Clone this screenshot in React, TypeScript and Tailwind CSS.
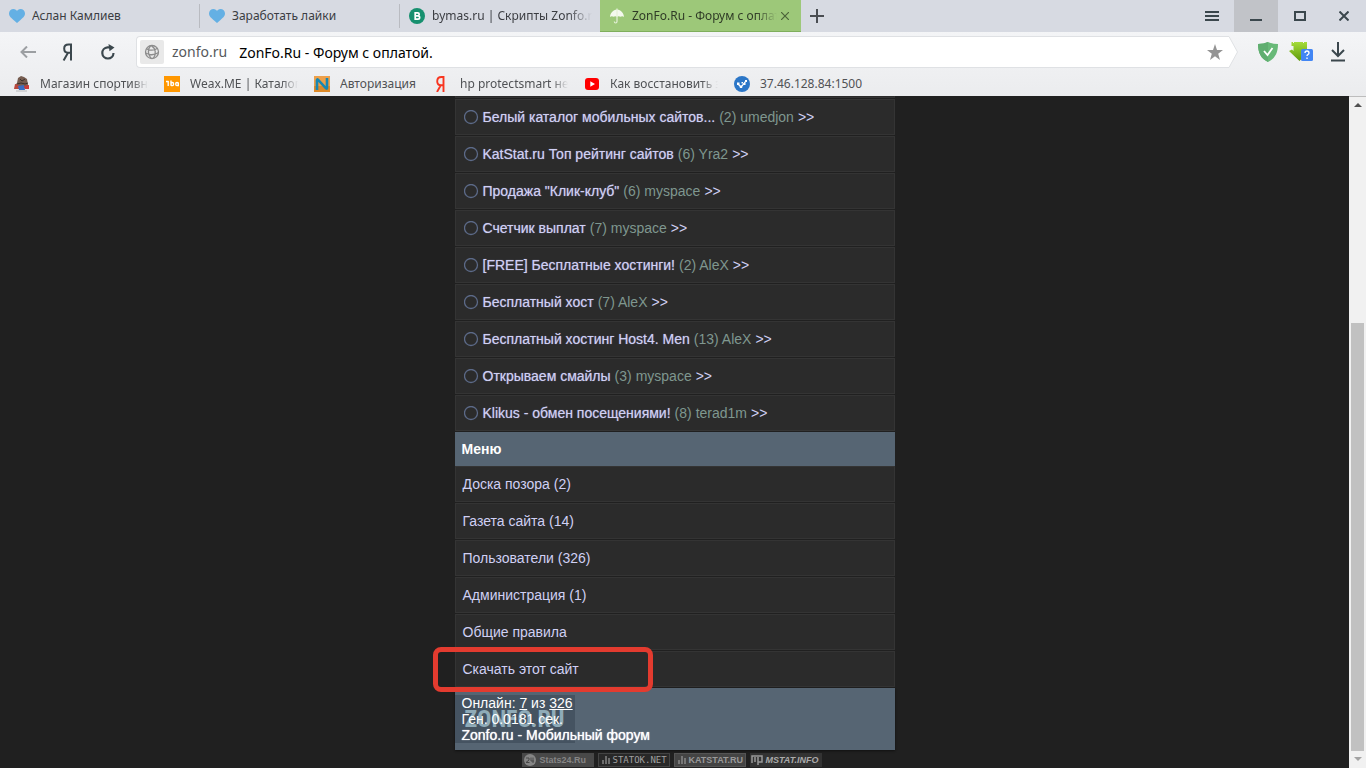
import React from 'react';

const uiFont = "font-['Noto_Sans',sans-serif]";

const topics = [
  { title: 'Белый каталог мобильных сайтов...', count: 2, author: 'umedjon' },
  { title: 'KatStat.ru Топ рейтинг сайтов', count: 6, author: 'Yra2' },
  { title: 'Продажа "Клик-клуб"', count: 6, author: 'myspace' },
  { title: 'Счетчик выплат', count: 7, author: 'myspace' },
  { title: '[FREE] Бесплатные хостинги!', count: 2, author: 'AleX' },
  { title: 'Бесплатный хост', count: 7, author: 'AleX' },
  { title: 'Бесплатный хостинг Host4. Men', count: 13, author: 'AleX' },
  { title: 'Открываем смайлы', count: 3, author: 'myspace' },
  { title: 'Klikus - обмен посещениями!', count: 8, author: 'terad1m' },
];

const menu = [
  { title: 'Доска позора (2)' },
  { title: 'Газета сайта (14)' },
  { title: 'Пользователи (326)' },
  { title: 'Администрация (1)' },
  { title: 'Общие правила' },
  { title: 'Скачать этот сайт', marked: true },
];

const HeartIcon = () => (
  <svg className="size-4 shrink-0" viewBox="0 0 16 16">
    <path d="M4.500 1C6.300 1 7.400 2 8 3c.6-1 1.700-2 3.500-2C14 1 16 2.800 16 5.500c0 3-2.500 4.500-4.500 6.500L8 15l-3.500-3C2.500 10 0 8.500 0 5.500C0 2.800 2 1 4.500 1z" fill="#64b0e4" />
  </svg>
);

const BymasIcon = () => (
  <svg className="size-4 shrink-0" viewBox="0 0 16 16">
    <circle cx="8" cy="8" r="8" fill="#17906f" />
    <path d="M6.200 4.800h2.500a1.500 1.500 0 0 1 0 3H6.200zM6.200 7.800h2.800a1.600 1.600 0 0 1 0 3.300H6.200z" fill="none" stroke="#fff" strokeWidth="1.700" />
  </svg>
);

const UmbrellaIcon = () => (
  <svg className="size-4 shrink-0" viewBox="0 0 16 16">
    <path d="M8 1.500C4 2 1.200 5 1 9c1-1 2.500-1 3.500-.2C5.500 8 7 8 8 8.700c1-.7 2.500-.7 3.500.1 1-.8 2.500-.8 3.500.2-.2-4-3-7-7-7.500z" fill="#f4f9ee" />
    <path d="M8 .5v13q0 1.500-1.500 1.500Q5.500 15 5.300 13.500" fill="none" stroke="#e4f0d8" strokeWidth="1.200" />
  </svg>
);

const GlobeIcon = () => (
  <svg className="size-4" viewBox="0 0 16 16" fill="none" stroke="#8c8c8c" strokeWidth="1.300">
    <circle cx="8" cy="8" r="6.500" />
    <path d="M6.500 1.700C3.800 5.500 4 10.500 7 14.400M7.500 1.600c4.200 3 5 8 2 12.600M2.500 4.800c4 2 8 1.600 11-.6M1.600 9c4 2.200 9 2 12.600-.2" />
  </svg>
);

const StoreIcon = () => (
  <svg className="size-4 shrink-0" viewBox="0 0 16 16">
    <path d="M4 2l3-2 3 1 3 2 1 6 1 2-6 2-6-1-2-3 2-2z" fill="#765d50" />
    <path d="M6 3l2 2 3-2M3 8l4-1 4 1 3-1" stroke="#3c302b" fill="none" />
    <path d="M1 8l4 1 1 4H0z" fill="#b9473d" />
    <path d="M4 10l6-1 1 5H5z" fill="#3a6ec2" />
    <path d="M10 10l5-1v4h-4z" fill="#ca3b3b" />
    <path d="M2 15h11" stroke="#b9babc" />
  </svg>
);

const WeaxIcon = () => (
  <svg className="size-4 shrink-0" viewBox="0 0 16 16">
    <rect width="16" height="16" fill="#ff9700" />
    <path d="M2 5.500h2.500M4.200 5v5M7 4.500v5.200M7 8q0-1.500 1.300-1.500T9.600 8 8.300 9.600 7 8M14.300 6.500v3.700M14.300 8q0-1.500-1.300-1.500T11.700 8 13 9.600 14.300 8" fill="none" stroke="#fff" strokeWidth="1.400" />
  </svg>
);

const AuthIcon = () => (
  <svg className="size-4 shrink-0" viewBox="0 0 16 16">
    <rect width="16" height="16" fill="#eda04a" />
    <rect y="10" width="16" height="6" fill="#dd8a28" />
    <path d="M3 14V4q0-1 1-.3l8 8.600q1 .7 1-.3V2" fill="none" stroke="#1888b4" strokeWidth="2.600" />
  </svg>
);

const YandexIcon = () => (
  <svg className="size-4 shrink-0" viewBox="0 0 16 16">
    <path d="M9.500 16V1H7.500C4.500 1 3.200 3 3.200 5.300S4.600 9.300 7 9.300h2.500M6.800 9.300L3 16" fill="none" stroke="#f8351f" strokeWidth="1.900" />
  </svg>
);

const YoutubeIcon = () => (
  <svg className="size-4 shrink-0" viewBox="0 0 16 16">
    <rect x="1" y="2" width="14" height="12" rx="3" fill="#f00" />
    <path d="M6.300 5.200v5.600L11 8z" fill="#fff" />
  </svg>
);

const ServerIcon = () => (
  <svg className="size-4 shrink-0" viewBox="0 0 16 16">
    <circle cx="8" cy="8" r="8" fill="#2b76c7" />
    <path d="M4 8l3 3.200L12 5" fill="none" stroke="#fff" strokeWidth="1.200" />
    <path d="M3 6.500h2.500V9H3zM5.800 9.500h2.400v2.400H5.800zM9.500 7h2v2h-2zM11 4h2v2h-2zM7.500 6h1.500v1.500H7.500z" fill="#fff" />
  </svg>
);

const tabs = [
  { title: 'Аслан Камлиев', icon: <HeartIcon /> },
  { title: 'Заработать лайки', icon: <HeartIcon /> },
  { title: 'bymas.ru | Скрипты Zonfo.ru', icon: <BymasIcon />, long: true },
];

const bookmarks = [
  { title: 'Магазин спортивного', icon: <StoreIcon />, long: true },
  { title: 'Weax.ME | Каталог', icon: <WeaxIcon />, long: true },
  { title: 'Авторизация', icon: <AuthIcon /> },
  { title: 'hp protectsmart не', icon: <YandexIcon />, long: true },
  { title: 'Как восстановить з', icon: <YoutubeIcon />, long: true },
  { title: '37.46.128.84:1500', icon: <ServerIcon /> },
];

const fade = '[mask-image:linear-gradient(to_right,black_85%,transparent)]';

const TabBar: React.FC = () => (
  <div className="flex h-8 bg-[#d7dae2] text-xs text-[#3b3d42]">
    {tabs.map((tab) => (
      <div key={tab.title} className={`flex w-50 items-center ${tab.long ? 'pr-2' : ''}`}>
        <button className="flex h-full min-w-0 flex-1 items-center gap-[7px] pl-[9px]">
          {tab.icon}
          <span className={`min-w-0 flex-1 overflow-hidden text-left whitespace-nowrap ${tab.long ? fade : ''}`}>{tab.title}</span>
        </button>
        {!tab.long && <span className="h-6 w-px bg-[#b9bbc1]" />}
      </div>
    ))}
    <div className="flex w-[201px] items-center border-b border-[#7fae5c] bg-[#9dc879] pr-3 text-[#2f3b26]">
      <button className="flex h-full min-w-0 flex-1 items-center gap-[7px] pl-[9px]">
        <UmbrellaIcon />
        <span className={`min-w-0 flex-1 overflow-hidden text-left whitespace-nowrap ${fade}`}>ZonFo.Ru - Форум с оплатой.</span>
      </button>
      <button aria-label="Закрыть вкладку" className="ml-1">
        <svg className="size-2" viewBox="0 0 8 8"><path d="M0 0l8 8M8 0L0 8" stroke="#4c643a" strokeWidth="1.200" /></svg>
      </button>
    </div>
    <button aria-label="Новая вкладка" className="flex w-8 items-center justify-center">
      <svg className="size-[14px]" viewBox="0 0 14 14"><path d="M7 0v14M0 7h14" stroke="#4a4d52" strokeWidth="2" /></svg>
    </button>
    <div className="ml-auto flex">
      <button aria-label="Меню браузера" className="flex w-11 items-center justify-center">
        <svg className="h-3 w-[14px]" viewBox="0 0 14 12"><path d="M0 2h14M0 6h14M0 10h14" stroke="#3b474d" strokeWidth="2" /></svg>
      </button>
      <button aria-label="Свернуть" className="flex w-11 items-center justify-center bg-[#c1c3c8]">
        <svg className="h-3 w-3" viewBox="0 0 12 12"><path d="M0 10h12" stroke="#3b474d" strokeWidth="2" /></svg>
      </button>
      <button aria-label="Развернуть" className="flex w-11 items-center justify-center">
        <svg className="h-[10px] w-3" viewBox="0 0 12 10"><path d="M1 1h10v8H1z" fill="none" stroke="#3b474d" strokeWidth="2" /></svg>
      </button>
      <button aria-label="Закрыть" className="flex w-11 items-center justify-center">
        <svg className="size-[10px]" viewBox="0 0 10 10"><path d="M.5.5l9 9M9.500.5l-9 9" stroke="#3b474d" strokeWidth="2" /></svg>
      </button>
    </div>
  </div>
);

const Toolbar: React.FC = () => (
  <div className="flex h-10 items-center">
    <div className="flex w-[136px] items-center pl-5">
      <button aria-label="Назад" className="w-10">
        <svg className="h-3 w-4" viewBox="0 0 16 12"><path d="M16 6H1.500M7 .5L1.500 6 7 11.500" fill="none" stroke="#9c9fa2" strokeWidth="2" /></svg>
      </button>
      <button aria-label="Яндекс" className="flex w-10 items-center">
        <svg className="h-[18px] w-4" viewBox="0 0 16 18"><path d="M11 17.500V1.500H8.500C5.500 1.500 4.200 3.300 4.200 5.600S5.600 9.800 8 9.800h3M8 9.800L3.600 17.500" fill="none" stroke="#3b474d" strokeWidth="2" /></svg>
      </button>
      <button aria-label="Обновить">
        <svg className="size-4" viewBox="0 0 16 16">
          <path d="M10 3.300H7.500A5.600 5.600 0 1 0 13.500 9" fill="none" stroke="#3b474d" strokeWidth="2.200" />
          <path d="M8.500 0l6 3.500-5 3.800z" fill="#3b474d" />
        </svg>
      </button>
    </div>
    <div className="flex h-8 min-w-0 flex-1">
      <div className="flex min-w-0 flex-1 items-center rounded-l border border-r-0 border-[#dfe1e4] bg-white pl-[3px] text-sm">
        <span className="flex size-6 items-center justify-center rounded-xs bg-[#e9e9e9]"><GlobeIcon /></span>
        <label htmlFor="address" className="ml-2 text-[#56595c]">zonfo.ru</label>
        <input id="address" type="text" className="ml-3 h-full min-w-0 flex-1 text-black outline-none" defaultValue="ZonFo.Ru - Форум с оплатой." />
        <button aria-label="Добавить в закладки">
          <svg className="size-4" viewBox="0 0 16 16"><path d="M8 0l2 5.900 6 .1-4.800 3.700L13 16l-5-3.700L3 16l1.800-6.300L0 6l6-.1z" fill="#949494" /></svg>
        </button>
        <span className="w-[5px]" />
      </div>
      <svg className="h-8 w-[10px]" viewBox="0 0 10 32"><path d="M0 .5h1L9.500 16 1 31.500H0" fill="#fff" stroke="#dfe1e4" /></svg>
    </div>
    <div className="flex items-center gap-3 pr-[21px] pl-5">
      <button aria-label="Защита">
        <svg className="h-5 w-5" viewBox="0 0 20 20">
          <path d="M0 2Q6 2 10 0q4 2 10 2c0 9-3 14.500-10 18C3 16.500 0 11 0 2z" fill="#68b978" />
          <path d="M0 2Q6 2 10 0v20C3 16.500 0 11 0 2z" fill="#60ae70" />
          <path d="M6 9l3.500 4 5-7" fill="none" stroke="#fff" strokeWidth="1.800" />
        </svg>
      </button>
      <button aria-label="Загрузчик" className="-ml-px">
        <svg className="h-5 w-6" viewBox="0 0 24 20">
          <defs>
            <linearGradient id="leaf" x1="0" y1="0" x2="0" y2="1">
              <stop offset="0" stopColor="#a5dc3a" />
              <stop offset="1" stopColor="#5f9a0a" />
            </linearGradient>
          </defs>
          <path d="M2.500 0H4v1h1V0h9v1h1V0h3v8h2l-1 2-8.500 9L0 9l3-1.500 1.500 1.500V4h-2z" fill="url(#leaf)" />
          <rect x="12" y="7" width="12" height="12" rx="1.500" fill="#4286f4" />
          <path d="M16 11q0-2 2-2t2 2q0 1-1 1.500t-1 1.500M18 15.500V17" fill="none" stroke="#fff" strokeWidth="1.300" />
        </svg>
      </button>
      <button aria-label="Загрузки" className="ml-[6px]">
        <svg className="h-5 w-[14px]" viewBox="0 0 14 20"><path d="M7 0v13.500M1 8l6 6 6-6M0 18.500h14" fill="none" stroke="#3b474d" strokeWidth="2" /></svg>
      </button>
    </div>
  </div>
);

const Bookmarks: React.FC = () => (
  <nav className="flex h-6 items-center gap-4 pl-[14px] text-xs text-[#505255]">
    {bookmarks.map((b) => (
      <a key={b.title} href="#" className="flex items-center gap-[10px]">
        {b.icon}
        <span className={`overflow-hidden whitespace-nowrap ${b.long ? `w-27 ${fade}` : 'min-w-[78px]'}`}>{b.title}</span>
      </a>
    ))}
  </nav>
);

const Forum: React.FC = () => (
  <main className="mx-auto w-110 text-sm leading-4 text-[#d0d0f4]">
    <div className="mb-px h-[2px] border-x border-b border-[#333] bg-[#2b2b2b]" />
    {topics.map((topic) => (
      <div key={topic.title} className="mb-px flex h-9 items-center gap-1 border border-[#343434] bg-[#2b2b2b] pl-2">
        <svg className="size-[15px]" viewBox="0 0 15 15"><circle cx="7" cy="7" r="6.500" fill="none" stroke="#5c6a88" strokeWidth="1.300" /></svg>
        <a href="#" className="[text-shadow:0_0_1px_#8c8cb0]">{topic.title}</a>
        <span className="text-[#7f978f]">({topic.count}) {topic.author}</span>
        <a href="#">&gt;&gt;</a>
      </div>
    ))}
    <h2 className="flex h-[34px] items-center bg-[#566573] pl-[7px] font-bold text-white">Меню</h2>
    {menu.map((item) => (
      <div key={item.title} className="relative mb-px flex h-9 items-center border border-[#343434] bg-[#2b2b2b] pl-[7px]">
        <a href="#">{item.title}</a>
        {item.marked && <span className="absolute -top-[5px] -left-[23px] z-10 h-[45px] w-55 rounded-lg border-5 border-[#e33b2f]" />}
      </div>
    ))}
    <footer className="relative bg-[#566573] px-[7px] py-[7px] text-white shadow-[0_1px_2px_#111]">
      <div aria-hidden="true" className="absolute top-[7px] left-0 flex h-12 w-30 items-center justify-center bg-[#455361] font-['Roboto_Condensed','Liberation_Sans',sans-serif] text-2xl font-bold text-[#8fabb8]">ZONFO.RU</div>
      <div className="relative">
        <p>Онлайн: <a href="#" className="underline">7</a> из <a href="#" className="underline">326</a></p>
        <p>Ген. 0.0181 сек.</p>
        <p className="[text-shadow:0_0_1px_#fff]">Zonfo.ru - Мобильный форум</p>
      </div>
    </footer>
  </main>
);

const BarsIcon = () => (
  <svg className="h-2 w-2 shrink-0" viewBox="0 0 8 8"><path d="M1 8V4M4 8V0M7 8V2" stroke="#999" strokeWidth="1.200" /></svg>
);

const Counters: React.FC = () => (
  <div className="mx-auto mt-[3px] flex w-110 justify-center gap-1 pr-[6px] text-[9px] leading-3 font-bold text-[#858585]">
    <a href="#" className="flex h-[14px] w-18 items-center gap-1 bg-[#484848] pl-[2px] font-['Liberation_Sans',sans-serif]">
      <svg className="size-3 shrink-0" viewBox="0 0 12 12">
        <circle cx="6" cy="6" r="6" fill="#858585" />
        <path d="M2 4h3v2L2 8.500h3.500M7 3.500V7h3M9 3.500V9" fill="none" stroke="#484848" />
      </svg>
      Stats24.Ru
    </a>
    <a href="#" className="flex h-[14px] w-18 items-center gap-[3px] border border-[#444] bg-[#282828] pl-[3px] font-['DejaVu_Sans_Mono',monospace] font-normal text-[#a0a0a0]">
      <BarsIcon />
      STATOK.NET
    </a>
    <a href="#" className="flex h-[14px] w-18 items-center gap-[3px] border border-[#555] bg-[#444] pl-[3px] text-[#999]">
      <BarsIcon />
      KATSTAT.RU
    </a>
    <a href="#" className="flex h-[14px] w-18 items-center gap-[3px] bg-[#333] pl-px text-[#aaa] italic">
      <svg className="h-[10px] w-3 shrink-0" viewBox="0 0 12 10"><path d="M1 8V1h10v6H7v3M4 2v5M7 2v5" fill="none" stroke="#999" strokeWidth="1.500" /></svg>
      MSTAT.INFO
    </a>
  </div>
);

const Scrollbar: React.FC = () => (
  <div className="flex w-[17px] flex-col items-center border-t border-[#bdbdbd] bg-[#f1f1f1]">
    <svg className="h-4 w-2" viewBox="0 0 8 16"><path d="M0 10l4-4 4 4z" fill="#505050" /></svg>
    <div className="grow-[210]" />
    <div className="w-[13px] grow-[428] bg-[#c1c1c1]" />
    <svg className="h-[17px] w-2" viewBox="0 0 8 17"><path d="M0 6l4 4 4-4z" fill="#a3a3a3" /></svg>
  </div>
);

export default function App() {
  return (
    <div className="flex h-screen flex-col overflow-hidden bg-[#202020]">
      <header className={`shrink-0 bg-linear-to-b from-[#f8f9fb] to-[#ebecee] ${uiFont}`}>
        <TabBar />
        <Toolbar />
        <Bookmarks />
      </header>
      <div className="flex min-h-0 flex-1">
        <div className="min-w-0 flex-1 overflow-hidden font-['Liberation_Sans',sans-serif]">
          <Forum />
          <Counters />
        </div>
        <Scrollbar />
      </div>
    </div>
  );
}
